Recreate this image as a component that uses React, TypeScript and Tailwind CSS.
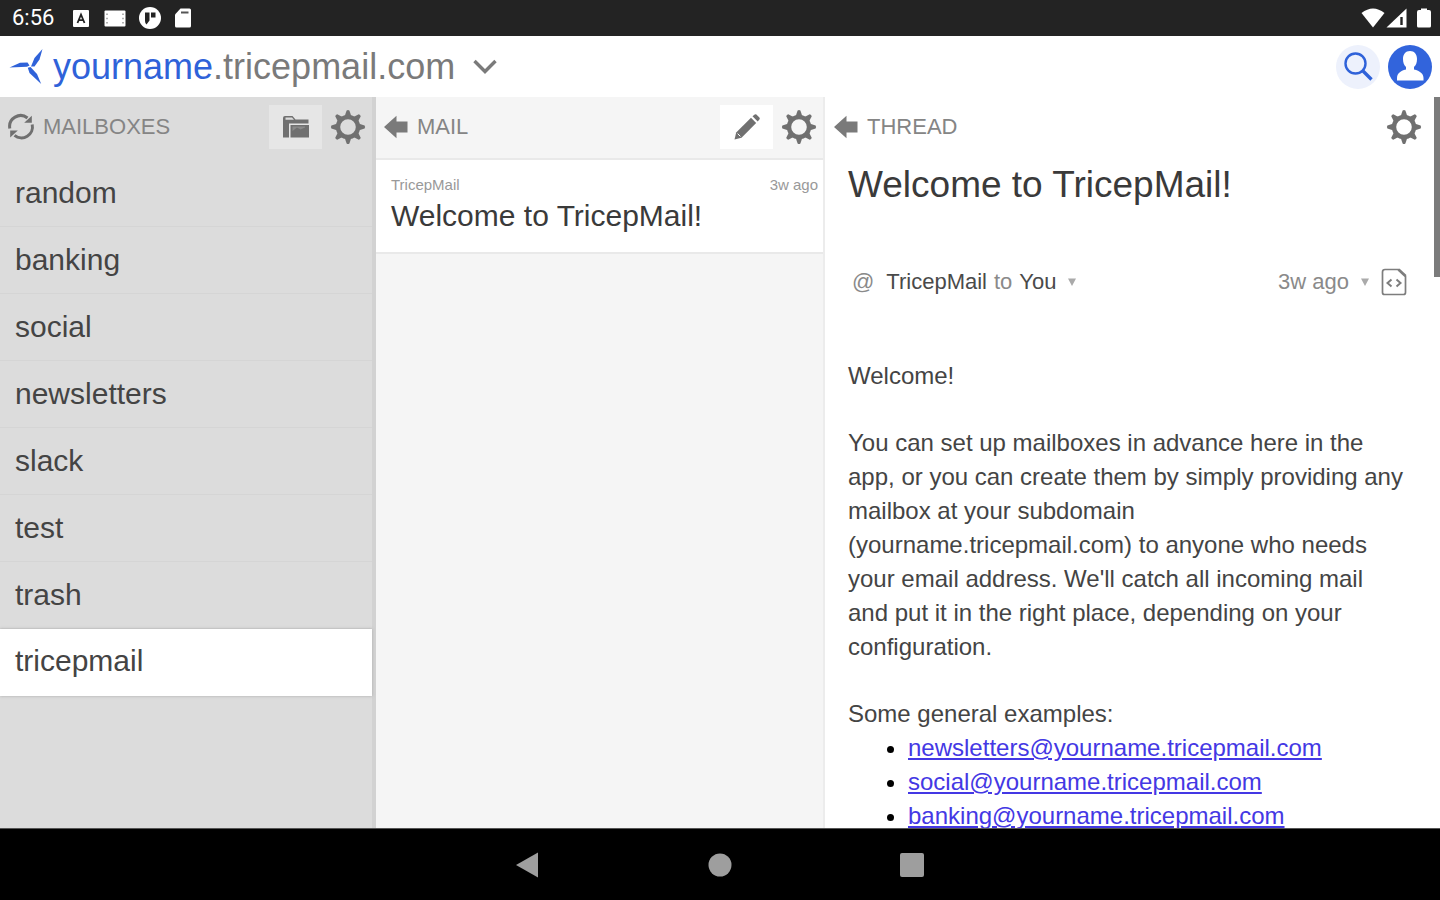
// src/App.tsx
import type { ReactNode } from "react";

const MAILBOXES = [
  "random",
  "banking",
  "social",
  "newsletters",
  "slack",
  "test",
  "trash",
  "tricepmail",
];

const EXAMPLES = [
  "newsletters@yourname.tricepmail.com",
  "social@yourname.tricepmail.com",
  "banking@yourname.tricepmail.com",
];

const TEETH = [0, 45, 90, 135, 180, 225, 270, 315];

function GearIcon() {
  return (
    <svg viewBox="0 0 36 36" className="size-9" aria-hidden="true">
      <circle cx="18" cy="18" r="10" fill="none" stroke="currentColor" strokeWidth="4.4" />
      {TEETH.map((deg) => (
        <path
          key={deg}
          d="M14.6 7.5 L16.6 1.4 Q18 0.4 19.4 1.4 L21.4 7.5 Z"
          fill="currentColor"
          transform={`rotate(${deg} 18 18)`}
        />
      ))}
    </svg>
  );
}

function BackIcon() {
  return (
    <svg viewBox="0 0 26 24" className="h-6 w-[26px]" aria-hidden="true">
      <path d="M1 12 L13.5 0.8 V6.5 H24.5 V17.5 H13.5 V23.2 Z" fill="#7a7a7a" />
    </svg>
  );
}

function RefreshIcon() {
  return (
    <svg viewBox="0 0 28 28" className="size-7" aria-hidden="true">
      <g fill="none" stroke="currentColor" strokeWidth="3">
        <path d="M2.8 15.5 A11 11 0 0 1 20.5 5" />
        <path d="M25.2 11.5 A11 11 0 0 1 7.5 22.4" />
      </g>
      <path d="M24.8 2.8 V9.8 H17.2 Z" fill="currentColor" />
      <path d="M3.2 24.6 V17.6 H10.8 Z" fill="currentColor" />
    </svg>
  );
}

function FolderIcon() {
  return (
    <svg viewBox="0 0 28 24" className="h-6 w-7" aria-hidden="true">
      <path d="M1 3 Q1 1 3 1 H10.5 L13.5 4.5 H26.5 V8.5 H7 V22.5 H1 Z" fill="#707070" />
      <path d="M3.5 2.5 H10 L12 4.8 H3.5 Z" fill="#dcdcdc" />
      <path d="M8.5 10 H27 V22.5 H8.5 Z" fill="#707070" />
      <path d="M10.5 16 L15 12.5 L18.5 14.5 L23 12.5 V11.5 H10.5 Z" fill="#8b8b8b" />
    </svg>
  );
}

function PencilIcon() {
  return (
    <svg viewBox="0 0 28 28" className="size-7" aria-hidden="true">
      <path d="M1.5 26.5 L3.2 19.5 L18 4.8 L23.2 10 L8.5 24.8 Z" fill="currentColor" />
      <path d="M19.5 3.3 L21.7 1.4 Q22.6 0.8 23.4 1.6 L26.4 4.6 Q27.2 5.4 26.6 6.3 L24.7 8.5 Z" fill="currentColor" />
      <path d="M4.6 20.6 L7.4 23.4" stroke="#ffffff" strokeWidth="1" />
    </svg>
  );
}

function StatusBar() {
  return (
    <div className="flex h-9 shrink-0 items-center justify-between bg-[#232323] pl-3 pr-2 text-white">
      <div className="flex items-center gap-[13px]">
        <span className="mr-1.5 font-[Roboto,sans-serif] text-[22px] leading-9">6:56</span>
        <svg viewBox="0 0 16 17" className="h-[17px] w-4" aria-hidden="true">
          <rect width="16" height="17" rx="1" fill="#fff" />
          <path d="M4.5 13 L8 4.5 L11.5 13 M6 10.2 H10" fill="none" stroke="#232323" strokeWidth="1.8" />
        </svg>
        <svg viewBox="0 0 22 17" className="ml-0.5 h-[17px] w-[22px]" aria-hidden="true">
          <rect width="21" height="16" x="0.5" y="0.5" rx="1" fill="#fff" />
          <path d="M3 3.5 V5 M3 7.7 V9.2 M3 12 V13.5 M19 3.5 V5 M19 7.7 V9.2 M19 12 V13.5" stroke="#999" strokeWidth="1.5" />
        </svg>
        <svg viewBox="0 0 22 22" className="size-[22px]" aria-hidden="true">
          <circle cx="11" cy="11" r="11" fill="#fff" />
          <path d="M6 5.5 H10.5 V13.5 L7.5 17.5 Q6 16 6 14 Z M12 5.5 H16.5 V10.5 H12 Z" fill="#232323" />
        </svg>
        <svg viewBox="0 0 18 20" className="h-5 w-[18px]" aria-hidden="true">
          <path d="M6.5 0.5 H15.5 Q17 0.5 17 2 V18 Q17 19.5 15.5 19.5 H2.5 Q1 19.5 1 18 V6.5 Z" fill="#fff" />
          <path d="M7 4.5 H14.5" stroke="#555" strokeWidth="2" />
        </svg>
      </div>
      <div className="flex items-center">
        <svg viewBox="0 0 24 20" className="h-5 w-6" aria-hidden="true">
          <path d="M0.5 5 Q12 -4 23.5 5 L12 19.5 Z" fill="#fff" />
        </svg>
        <svg viewBox="0 0 22 20" className="ml-px h-5 w-[22px]" aria-hidden="true">
          <path d="M0.5 19.5 L20.5 0.5 V19.5 Z" fill="#fff" />
          <path d="M15.5 9 V17" stroke="#232323" strokeWidth="2.4" />
        </svg>
        <svg viewBox="0 0 16 20" className="ml-2 h-5 w-4" aria-hidden="true">
          <path d="M5 0.5 H11 V2 H13 Q15 2 15 4 V18 Q15 19.5 13.5 19.5 H2.5 Q1 19.5 1 18 V4 Q1 2 3 2 H5 Z" fill="#fff" />
        </svg>
      </div>
    </div>
  );
}

function Header() {
  return (
    <header className="flex h-[61px] shrink-0 items-center justify-between bg-white pl-[9px] pr-2">
      <button type="button" className="flex items-center">
        <svg viewBox="0 0 36 38" className="h-[38px] w-9" aria-hidden="true">
          <g fill="#2f62d9">
            <path d="M0.5 19.5 L11 14.8 L18.5 14.6 L20.5 17.5 L18 18.8 Z" />
            <path d="M33.5 1 L30.5 11.5 L25.5 18.6 L22 18.4 L25.5 10 Z" />
            <path d="M32.2 36 L28 26 L21.5 19 L18.8 19.8 L20.5 25 Z" />
          </g>
        </svg>
        <span className="ml-2 text-[36px] leading-[60px] text-[#7a7a7a]">
          <span className="text-[#2f62d9]">yourname</span>.tricepmail.com
        </span>
        <svg viewBox="0 0 24 16" className="ml-[18px] h-4 w-6" aria-hidden="true">
          <path d="M1.5 2 L12 12.5 L22.5 2" fill="none" stroke="#7a7a7a" strokeWidth="3.4" />
        </svg>
      </button>
      <div className="flex items-center gap-2">
        <button type="button" aria-label="Search" className="flex size-11 items-center justify-center rounded-full bg-[#edf1fc]">
          <svg viewBox="0 0 30 30" className="size-[30px]" aria-hidden="true">
            <circle cx="12.5" cy="11.5" r="10" fill="none" stroke="#2f62d9" strokeWidth="2.4" />
            <path d="M19.5 18.5 L28.5 27.5" stroke="#2f62d9" strokeWidth="3.4" />
          </svg>
        </button>
        <button type="button" aria-label="Account" className="size-11">
          <svg viewBox="0 0 44 44" className="size-11" aria-hidden="true">
            <circle cx="22" cy="22" r="22" fill="#3264dc" />
            <path
              d="M22 6 C26.5 6 29 9.5 29 14 C29 17.5 28 20.5 26 22 V24.5 C32 26 35.5 28.5 35.5 33 V35.5 H9 V33 C9 28.5 12 26 18 24.5 V22 C16 20.5 15 17.5 15 14 C15 9.5 17.5 6 22 6 Z"
              fill="#fff"
            />
          </svg>
        </button>
      </div>
    </header>
  );
}

interface PaneHeaderProps {
  title: string;
  icon: ReactNode;
  iconLabel: string;
  children?: ReactNode;
}

function PaneHeader({ title, icon, iconLabel, children }: PaneHeaderProps) {
  return (
    <div className="flex h-[60px] shrink-0 items-center text-[#707070]">
      <button type="button" aria-label={iconLabel}>
        {icon}
      </button>
      <h2 className="ml-2 grow text-[22px] leading-[60px] text-[#858585]">{title}</h2>
      {children}
      <button type="button" aria-label={`${title} settings`} className="ml-2">
        <GearIcon />
      </button>
    </div>
  );
}

function MailboxPane() {
  return (
    <nav className="flex flex-col border-r-4 border-[#d2d2d2] bg-[#dcdcdc]">
      <div className="pb-[3px] pl-[7px] pr-[6px]">
        <PaneHeader title="MAILBOXES" icon={<RefreshIcon />} iconLabel="Refresh">
          <button type="button" aria-label="New mailbox" className="flex h-11 w-[53px] items-center justify-center bg-[#e6e6e6]">
            <FolderIcon />
          </button>
        </PaneHeader>
      </div>
      <ul>
        {MAILBOXES.map((name) => (
          <li key={name}>
            <button
              type="button"
              className={
                name === "tricepmail"
                  ? "block h-[67px] w-full bg-white pb-1 pl-[15px] text-left text-[30px] text-[#444444] shadow-[0_0_3px_#aaaaaa]"
                  : "block h-[67px] w-full border-b border-[#d5d5d5] pb-0.5 pl-[15px] text-left text-[30px] text-[#444444]"
              }
            >
              {name}
            </button>
          </li>
        ))}
      </ul>
    </nav>
  );
}

function MailPane() {
  return (
    <section className="flex flex-col border-r-2 border-[#ececec] bg-[#f5f5f5]">
      <div className="border-b-2 border-[#e9e9e9] pb-px pl-[7px] pr-[6px]">
        <PaneHeader title="MAIL" icon={<BackIcon />} iconLabel="Back to mailboxes">
          <button type="button" aria-label="Compose" className="flex h-11 w-[53px] items-center justify-center bg-white">
            <PencilIcon />
          </button>
        </PaneHeader>
      </div>
      <button type="button" className="border-b-2 border-[#e9e9e9] bg-white pb-[15px] pl-[15px] pr-[5px] pt-[15px] text-left">
        <span className="flex justify-between text-[15px] leading-5 text-[#999999]">
          <span>TricepMail</span>
          <span>3w ago</span>
        </span>
        <span className="block text-[30px] leading-[42px] text-[#3a3a3a]">Welcome to TricepMail!</span>
      </button>
    </section>
  );
}

function ThreadPane() {
  return (
    <section className="relative min-h-0 overflow-hidden bg-white">
      <div className="pl-2 pr-[18px]">
        <PaneHeader title="THREAD" icon={<BackIcon />} iconLabel="Back to mail" />
      </div>
      <article className="pl-[23px] pr-[33px] text-[24px] leading-[34px] text-[#444444]">
        <h1 className="text-[37px] leading-[56px] text-[#3a3a3a]">Welcome to TricepMail!</h1>
        <div className="mt-[55px] flex items-center text-[22px] leading-7 text-[#8a8a8a]">
          <span className="ml-1 mr-3">@</span>
          <span className="text-[#4a4a4a]">TricepMail</span>
          <span className="mx-[7px]">to</span>
          <span className="text-[#4a4a4a]">You</span>
          <button type="button" aria-label="Recipient details" className="ml-3">
            <svg viewBox="0 0 8 8" className="size-2" aria-hidden="true">
              <path d="M0 0.5 H8 L4 8 Z" fill="#aaaaaa" />
            </svg>
          </button>
          <span className="ml-auto">3w ago</span>
          <button type="button" aria-label="Date details" className="ml-3">
            <svg viewBox="0 0 8 8" className="size-2" aria-hidden="true">
              <path d="M0 0.5 H8 L4 8 Z" fill="#aaaaaa" />
            </svg>
          </button>
          <button type="button" aria-label="View source" className="ml-3">
            <svg viewBox="0 0 26 28" className="h-7 w-[26px]" fill="none" stroke="#7d7d7d" strokeWidth="1.7" aria-hidden="true">
              <path d="M4 1.5 H17.5 L24.5 8 V24.5 Q24.5 26.5 22.5 26.5 H3.5 Q1.5 26.5 1.5 24.5 V4 Q1.5 1.5 4 1.5 Z" />
              <path d="M17.5 1.5 L24.5 8" strokeWidth="2.8" />
              <path d="M10.5 11.5 L6.5 15 L10.5 18.5 M15.5 11.5 L19.5 15 L15.5 18.5" strokeWidth="2" />
            </svg>
          </button>
        </div>
        <p className="mt-[63px]">Welcome!</p>
        <p className="mt-[33px]">
          You can set up mailboxes in advance here in the app, or you can create them by simply
          providing any mailbox at your subdomain (yourname.tricepmail.com) to anyone who needs your
          email address. We'll catch all incoming mail and put it in the right place, depending on
          your configuration.
        </p>
        <p className="mt-[33px]">Some general examples:</p>
        <ul className="list-disc pl-[60px] marker:text-black">
          {EXAMPLES.map((address) => (
            <li key={address}>
              <a href={`mailto:${address}`} className="text-[#4438e4] underline">
                {address}
              </a>
            </li>
          ))}
        </ul>
      </article>
      {/* scroll thumb */}
      <div className="absolute right-0 top-0 h-[180px] w-[6px] bg-[#7b7b7b]" />
    </section>
  );
}

function SystemNav() {
  return (
    <div className="flex h-[72px] shrink-0 items-center justify-center gap-[168px] border-t border-[#555555] bg-black">
      <button type="button" aria-label="Back">
        <svg viewBox="0 0 24 26" className="h-[26px] w-6" aria-hidden="true">
          <path d="M0 13 L22 0.5 V25.5 Z" fill="#9e9e9e" />
        </svg>
      </button>
      <button type="button" aria-label="Home">
        <svg viewBox="0 0 24 24" className="size-6" aria-hidden="true">
          <circle cx="12" cy="12" r="11.5" fill="#9e9e9e" />
        </svg>
      </button>
      <button type="button" aria-label="Recent apps">
        <svg viewBox="0 0 24 24" className="size-6" aria-hidden="true">
          <rect width="24" height="24" rx="2" fill="#9e9e9e" />
        </svg>
      </button>
    </div>
  );
}

export default function App() {
  return (
    <div className="flex h-screen flex-col overflow-hidden font-['Liberation_Sans',Arial,sans-serif]">
      <StatusBar />
      <Header />
      <main className="grid min-h-0 grow grid-cols-[376fr_449fr_615fr] grid-rows-[minmax(0,1fr)]">
        <MailboxPane />
        <MailPane />
        <ThreadPane />
      </main>
      <SystemNav />
    </div>
  );
}
